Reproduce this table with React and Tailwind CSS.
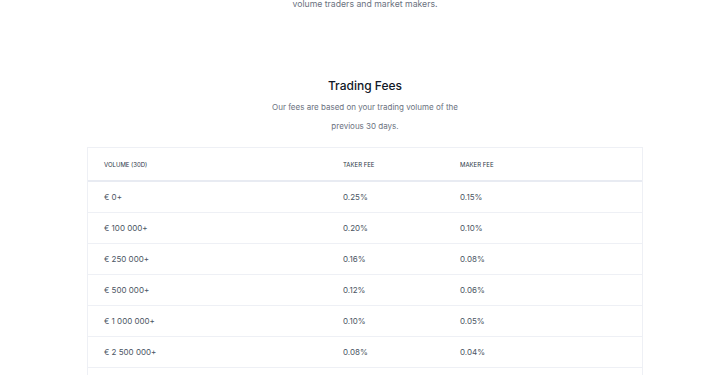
const tiers = [
  { volume: '€ 0+', taker: '0.25%', maker: '0.15%' },
  { volume: '€ 100 000+', taker: '0.20%', maker: '0.10%' },
  { volume: '€ 250 000+', taker: '0.16%', maker: '0.08%' },
  { volume: '€ 500 000+', taker: '0.12%', maker: '0.06%' },
  { volume: '€ 1 000 000+', taker: '0.10%', maker: '0.05%' },
  { volume: '€ 2 500 000+', taker: '0.08%', maker: '0.04%' },
  { volume: '€ 5 000 000+', taker: '0.06%', maker: '0.02%' },
]

export default function App() {
  return (
    <div className="h-[375px] w-[701px] overflow-hidden bg-white font-['Inter',sans-serif]">
      <div className="ml-[87px] w-[556px]">
        <p className="-mt-[6px] text-center text-[8.7px] leading-[20px] text-[#6b7280]">
          volume traders and market makers.
        </p>

        <h2 className="mt-[62px] text-center text-[12px] font-medium leading-[20px] text-[#111827]">
          Trading Fees
        </h2>
        <p className="mx-auto mt-[2px] w-[200px] text-center text-[8px] leading-[19px] text-[#6b7280]">
          Our fees are based on your trading volume of the previous 30 days.
        </p>

        <div className="mt-[11px] border border-b-0 border-[#eef0f5]">
          <table className="w-full table-fixed text-left">
            <thead>
              <tr className="h-[33px] border-b-2 border-[#e8ebf2] text-[6px] uppercase text-[#2d3748]">
                <th className="w-[255px] pl-[16px] font-normal">Volume (30D)</th>
                <th className="w-[117px] font-normal">Taker fee</th>
                <th className="font-normal">Maker fee</th>
              </tr>
            </thead>
            <tbody className="text-[8px] text-[#4b5563]">
              {tiers.map((t) => (
                <tr key={t.volume} className="h-[31px] border-b border-[#eef0f5]">
                  <td className="pl-[16px]">{t.volume}</td>
                  <td>{t.taker}</td>
                  <td>{t.maker}</td>
                </tr>
              ))}
            </tbody>
          </table>
        </div>
      </div>
    </div>
  )
}
